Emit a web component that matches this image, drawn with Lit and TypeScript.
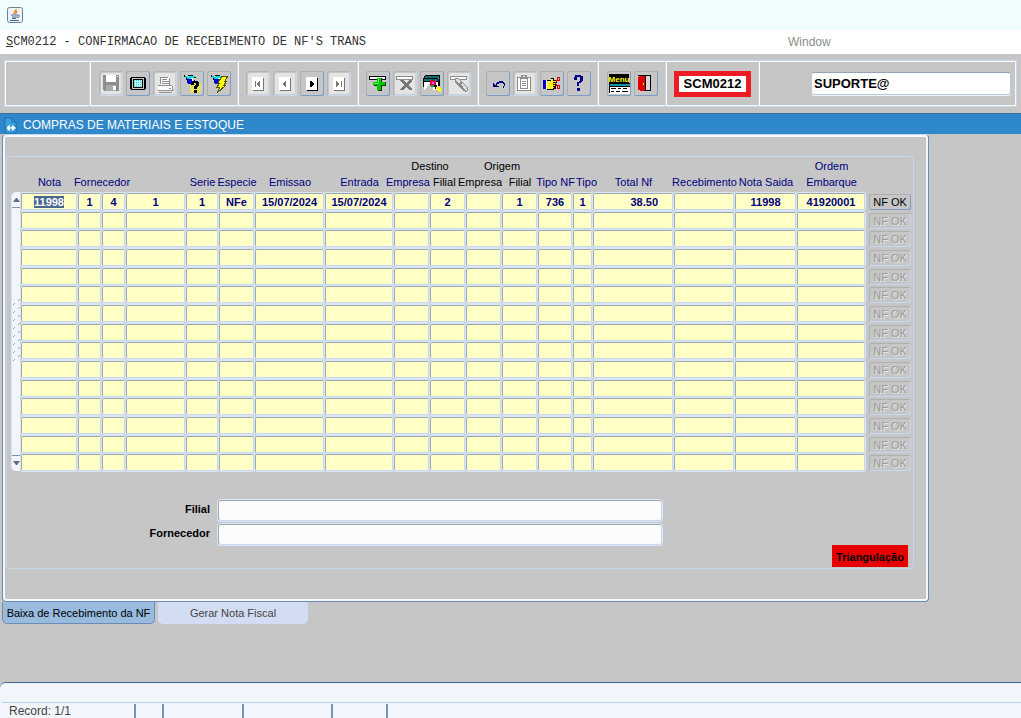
import { LitElement, html, css, svg, nothing, TemplateResult } from "lit";
import { customElement } from "lit/decorators.js";
import { classMap } from "lit/directives/class-map.js";

type Tool = { name: string; art: TemplateResult; off?: boolean };
type Column = { key: string; label: string; width: number; align?: "right" };

const torch = svg`
  <path d="M5 5h2v2h-2zM7 6h2v2h-2z" fill="#00c8d8"/>
  <path d="M9 4h4v1h2v2h-3v1h-3z" fill="#00e0e8"/>
  <path d="M4 4h1v2h-1zM6 7h1v2h1v1h-1v-1h-1zM8 4h5v1h-5zM14 6h2v1h-2zM14 9h1v1h-1zM13 10h1v1h-1z" fill="#000"/>
  <path d="M7 8h5v1h1v3h-2v1h-3v-1h-1z" fill="#0000c8"/>
  <path d="M11 7h2v3h-1v-2h-1z" fill="#fff"/>`;

const page = svg`
  <path d="M6 6h11v13h-11z" fill="#fff"/>
  <path d="M17 7h1v13h-11v-1h10z" fill="#777"/>`;

const bar = svg`<path d="M3 5h17v4h-17z" fill="#000"/><path d="M4 6h15v2h-15z" fill="#fff"/>`;
const barOff = svg`<path d="M3 5h17v4h-17z" fill="#8c8c8c"/><path d="M4 6h15v2h-15z" fill="#fff"/>`;

const groups: Tool[][] = [
  [
    { name: "Salvar", off: true, art: svg`
      <path d="M4 4h16v16h-15l-1-1z" fill="#8e8e8e"/>
      <path d="M7 4h10v7h-10z" fill="#fff"/>
      <path d="M7 14h10v6h-10z" fill="#a9a9a9"/><path d="M14 15h3v4h-3z" fill="#fff"/>
      <path d="M18 5h1v1h-1z" fill="#fff"/>` },
    { name: "Tela", art: svg`
      <path d="M5 6h14v1h1v11h-1v1h-14v-1h-1v-11h1z" fill="#000"/>
      <path d="M6 7h12v11h-12z" fill="#c6c6c6"/>
      <path d="M7 8h10v9h-10z" fill="#000"/><path d="M8 9h8v7h-8z" fill="#b8f4f4"/>
      <path d="M8 9.500h8M8 11.500h8M8 13.500h8M8 15.500h8" stroke="#38d0d8" stroke-dasharray="1 1"/>` },
    { name: "Imprimir", off: true, art: svg`
      <path d="M8 6h8l1 1v7h-10v-8z" fill="#fff"/>
      <path d="M7 6h8v1h-7v6h-1zM9 8h5v1h-5zM9 10h7v1h-7zM9 12h7v1h-7zM16 7h1v7h-1z" fill="#8c8c8c"/>
      <path d="M5 15h15v5h-15z" fill="#fff"/>
      <path d="M5 14h14v1h-14zM5 19h16v1h-16zM19 15h1v4h-1zM16 17h2v1h-2zM6 21h13v1h-13z" fill="#909090"/>` },
    { name: "Entrar consulta", art: svg`
      <path d="M10 12.500h11M10 14.500h11M10 16.500h11M10 18.500h11M10 20.500h11" stroke="#ffff00" stroke-dasharray="1 1"/>
      <path d="M11 13.500h10M11 15.500h10M11 17.500h10M11 19.500h10M11 21.500h10" stroke="#ffff00" stroke-dasharray="1 1"/>
      ${torch}
      <path d="M13 10h5v1h1v4h-1v1h-1v2h-3v-3h1v-1h1v-2h-2v2h-3v-2h1v-1h1zM14 19h3v3h-3z" fill="#000"/>` },
    { name: "Executar consulta", art: svg`
      ${torch}
      <path d="M15 5h6l-3 5h2l-3 4h2l-9 8 3-6h-3l3-4h-2z" fill="#ffff00" stroke="#555500" stroke-width="1"/>` },
  ],
  [
    { name: "Primeiro", off: true, art: svg`${page}<path d="M9 10h1v6h-1zM14 10v6h-1v-1h-1v-1h-1v-2h1v-1h1v-1z" fill="#777"/>` },
    { name: "Anterior", off: true, art: svg`${page}<path d="M13 10v6h-1v-1h-1v-1h-1v-2h1v-1h1v-1z" fill="#777"/>` },
    { name: "Proximo", art: svg`<path d="M6 6h11v13h-11z" fill="#fff"/><path d="M17 7h1v13h-11v-1h10z" fill="#000"/><path d="M10 10h2v1h1v1h1v2h-1v1h-1v1h-2z" fill="#000"/>` },
    { name: "Ultimo", off: true, art: svg`${page}<path d="M14 10h1v6h-1zM9 10h1v1h1v1h1v2h-1v1h-1v1h-1z" fill="#777"/>` },
  ],
  [
    { name: "Inserir", art: svg`${bar}
      <path d="M11 7h5v4h4v4h-4v5h-4v-5h-4v-3h3z" fill="#003c00"/>
      <path d="M11 7h4v4h4v3h-4v5h-4v-5h-4v-3h4z" fill="#00c800"/><path d="M12 8h1v4h-1zM8 12h4v1h-4z" fill="#60ff60"/>` },
    { name: "Excluir", off: true, art: svg`${barOff}
      <path d="M7 9h3l3 3 3-3h3v1l-4 4 4 4v1h-3l-3-3-3 3h-3v-1l4-4-4-4z" fill="#777"/>` },
    { name: "Limpar", art: svg`
      <path d="M5 4h15v1h-15zM3 8h1v8h-1zM3 7h15v1h-15zM19 5h1v10h-1zM3 10h15v1h-15zM4 5h1v2h-1zM18 8h1v7h-1z" fill="#000"/>
      <path d="M5 5h14v2h-14zM4 8h14v2h-14z" fill="#107078"/>
      <path d="M4 11h14v8h-10v-3l-2 3h-2z" fill="#fff"/>
      <path d="M5 19l4-6 4 2v4z" fill="#c6c6c6"/>
      <path d="M10 9h4v1h2v4h-1v2h-4v-1h-1z" fill="#e00040"/><path d="M12 11h2v2h-2z" fill="#ff50ff"/>
      <path d="M11 14h3v2h-3z" fill="#00a830"/><path d="M14 14h3v2h1v2h-3v-2h-1z" fill="#000"/>
      <path d="M16 16h3l2 2v3h-2l-3-3z" fill="#ffff00"/>` },
    { name: "Editar", off: true, art: svg`${barOff}
      <path d="M8 7h4l9 10v3l-2 1-3-1-8-9z" fill="#8c8c8c"/>
      <path d="M9 8h3l2 3-2 1-3-2zM14 13l2-1 4 5v3l-2-1z" fill="#dedede"/>` },
  ],
  [
    { name: "Desfazer", art: svg`
      <path d="M6 10h1v6h6v-1h-2v-1h-2v-1h-1v-1h-1v-2zM10 12h1v-1h2v-1h4v1h1v1h1v3h-1v2h-1v-2h1v-2h-1v-1h-4v1h-2v1h-1z" fill="#000080"/>` },
    { name: "Lista", off: true, art: svg`
      <path d="M4 6h14v14h-14z" fill="#8c8c8c"/><path d="M5 7h12v12h-12z" fill="#fff"/>
      <path d="M7 7h8v11h-8z" fill="#8c8c8c"/><path d="M8 8h6v9h-6z" fill="#fff"/>
      <path d="M8 4h6v4h-6z" fill="#8c8c8c"/><path d="M10 5h2v1h-2z" fill="#fff"/>
      <path d="M9 10h4v1h-4zM9 12h4v1h-4zM9 14h4v1h-4z" fill="#8c8c8c"/>` },
    { name: "Recortar", art: svg`
      <path d="M3 9h3v9h-3z" fill="#0000d0"/><path d="M6 9h1v9h-1z" fill="#fff"/>
      <path d="M7 9h4v-2h3v2h3v3h-1v6h-2v1h-7z" fill="#000"/>
      <path d="M7 10h4v-2h2v2h3v1h-3v1h2v1h-2v1h2v1h-2v1h1v1h-1v1h-6z" fill="#ffee20"/>
      <path d="M17.500 6.500h2v3h-2zM17.500 14.500h2v3h-2zM17 9l-2 4M17 15l-2-4" fill="none" stroke="#e00000"/>` },
    { name: "Ajuda", art: svg`
      <path d="M8 4h6v1h2v5h-1v1h-1v1h-2v3h-2v-4h2v-1h1v-4h-3v3h-3v-3h1zM10 17h3v3h-3z" fill="#000090"/>` },
  ],
  [
    { name: "Menu", art: svg`
      <path d="M2 3h20v9h-20z" fill="#000"/>
      <text class="tiny" x="12" y="11" text-anchor="middle">Menu</text>
      <path d="M2 13h21v2h-21z" fill="#0a98a8"/><path d="M2 15h21v8h-21z" fill="#fff"/>
      <path d="M2 12h21v1h-21zM2 15h21v1h-21zM2 13h1v9h-1zM4 17h5v1h-5zM11 17h3v1h-3zM16 17h4v1h-4zM4 20h3v1h-3zM9 20h4v1h-4zM15 20h6v1h-6z" fill="#000"/>` },
    { name: "Sair", art: svg`
      <path d="M4 4h13v16h-9v-1h8v-14h-12z" fill="#000"/>
      <path d="M12 5h4v14h-4z" fill="#d8d8d8"/><path d="M4 6h1v-1h6v1h1v13h-1v1h-5v-1h-2z" fill="#e00000"/>
      <path d="M11 5h1v15h-2v-1h1z" fill="#000"/><path d="M9 12h1v2h-1z" fill="#ffff00"/>` },
  ],
];

const columns: Column[] = [
  { key: "nota", label: "Nota", width: 57 },
  { key: "forn1", label: "Fornecedor, empresa", width: 24 },
  { key: "forn2", label: "Fornecedor, filial", width: 24 },
  { key: "forn3", label: "Fornecedor, codigo", width: 60 },
  { key: "serie", label: "Serie", width: 33 },
  { key: "especie", label: "Especie", width: 36 },
  { key: "emissao", label: "Emissao", width: 70 },
  { key: "entrada", label: "Entrada", width: 69 },
  { key: "destEmpresa", label: "Destino, Empresa", width: 36 },
  { key: "destFilial", label: "Destino, Filial", width: 36 },
  { key: "origEmpresa", label: "Origem, Empresa", width: 36 },
  { key: "origFilial", label: "Origem, Filial", width: 36 },
  { key: "tipoNf", label: "Tipo NF", width: 35 },
  { key: "tipo", label: "Tipo", width: 20 },
  { key: "total", label: "Total Nf", width: 81, align: "right" },
  { key: "recebimento", label: "Recebimento", width: 61 },
  { key: "notaSaida", label: "Nota Saida", width: 62 },
  { key: "ordem", label: "Ordem Embarque", width: 69 },
];

const records: Record<string, string>[] = [
  {
    nota: "11998", forn1: "1", forn2: "4", forn3: "1", serie: "1", especie: "NFe",
    emissao: "15/07/2024", entrada: "15/07/2024", destFilial: "2", origFilial: "1",
    tipoNf: "736", tipo: "1", total: "38.50", notaSaida: "11998", ordem: "41920001",
  },
];

@customElement("tool-bar")
class ToolBar extends LitElement {
  static styles = css`
    :host { display: block; background: #c6c6c6; padding: 6px 4px; }
    .frame { display: flex; height: 47px; box-sizing: border-box; border: 1px solid #c6d7ef; box-shadow: inset 1px 1px #fff, inset -1px -1px #f4f8ff; }
    .cell { display: flex; align-items: center; gap: 3px; padding: 0 7px; border-right: 1px solid #fff; box-shadow: inset -1px 0 #c6d7ef; box-sizing: border-box; flex: none; }
    .blank { width: 86px; }
    .first { width: 148px; padding-left: 8px; }
    .group { width: 120px; }
    .short { width: 68px; padding-left: 8px; }
    .user { flex: 1; border: 0; box-shadow: none; padding: 0 5px 0 51px; min-width: 0; }
    button { width: 24px; height: 25px; padding: 0; border: 0; border-radius: 2px; background: #c6c6c6; box-shadow: inset 1px 1px #adadad, inset -1px -1px #7b9cc6; display: block; flex: none; }
    button:disabled { background: #e4e4e4; box-shadow: inset 1px 1px #b5b5b5, inset -1px -1px #c6d7ef, inset 2px 2px #c6c6c6, inset -2px -2px #d0d0d0; }
    svg { display: block; shape-rendering: crispEdges; }
    .tiny { font: bold 8px "Liberation Sans", Arial, sans-serif; fill: #ffff00; }
    .code { font: bold 13px/16px "Liberation Sans", Arial, sans-serif; color: #000; background: #fff; border: 5px solid #ed1c24; width: 77px; height: 26px; box-sizing: border-box; text-align: center; white-space: nowrap; }
    .code-cell { width: 93px; padding: 0 7px; }
    input { width: 100%; height: 23px; box-sizing: border-box; border: 1px solid #b8c8dc; border-top-color: #94a3b8; border-radius: 3px; background: #fff; padding: 0 2px; font: bold 13px "Liberation Sans", Arial, sans-serif; color: #000; box-shadow: 0 1px #f0f5fc; }
  `;
  render() {
    const sizes = ["first", "group", "group", "group", "short"];
    return html`<div class="frame" role="toolbar">
      <div class="cell blank"></div>
      ${groups.map((g, i) => html`<div class="cell ${sizes[i]}">
        ${g.map((t) => html`<button aria-label=${t.name} ?disabled=${!!t.off}>
          <svg width="24" height="25" viewBox="0 0 24 25" aria-hidden="true">${t.art}</svg></button>`)}
      </div>`)}
      <div class="cell code-cell"><div class="code">SCM0212</div></div>
      <div class="cell user"><input aria-label="Usuario" .value=${"SUPORTE@"} /></div>
    </div>`;
  }
}

@customElement("nota-grid")
class NotaGrid extends LitElement {
  static styles = css`
    :host { display: block; }
    table { border-collapse: collapse; table-layout: fixed; width: 890px; font: 11px/13px "Liberation Sans", Arial, sans-serif; color: #000080; }
    th, td { padding: 0; font-weight: normal; vertical-align: top; }
    th { height: 16px; }
    .lab { display: flex; justify-content: center; white-space: nowrap; }
    .start { justify-content: flex-start; padding-left: 3px; }
    .end { justify-content: flex-end; }
    .black { color: #000; }
    tbody tr { height: 19px; }
    tbody tr:nth-child(3n + 2) { height: 18px; }
    input { display: block; margin-top: 1px; width: calc(100% - 1px); height: 17px; box-sizing: border-box; border: 1px solid #c6d7ef; border-top-color: #a0a6b0; border-left-color: #a0a8b4; border-radius: 2px; box-shadow: 0 0 0 1px #d9e6f6; background: #ffffc6; padding: 0; font: bold 11px "Liberation Sans", Arial, sans-serif; color: #000080; text-align: center; outline: none; }
    input::selection { background: #4a6990; color: #fff; }
    .right { text-align: right; padding-right: 14px; }
    button { display: block; margin: 2px 0 0 3px; width: 42px; height: 16px; padding: 0; border: 0; border-radius: 2px; background: #c6c6c6; box-shadow: inset 1px 1px #adadad, inset -1px -1px #7b9cc6; font: 11px/16px "Liberation Sans", Arial, sans-serif; color: #000; }
    button:disabled { color: #999; text-shadow: 1px 1px #e6e6e6; box-shadow: inset 1px 1px #b0b0b0, inset -1px -1px #c6d7ef; }
    .track { width: 9px; height: 279px; box-sizing: border-box; background: #f2f6fc; border-radius: 5px 0 0 5px; border-left: 1px solid #dbe6f5; display: flex; flex-direction: column; justify-content: space-between; align-items: stretch; }
    .grip { align-self: center; }
    .arrow { width: 8px; height: 16px; margin: 0; background: none; box-shadow: none; border-radius: 0; }
    .up { border-bottom: 1px solid #7b94b5; }
    .down { border-top: 1px solid #7b94b5; }
    svg { display: block; }
  `;
  firstUpdated() {
    const first = this.renderRoot.querySelector("tbody input") as HTMLInputElement | null;
    first?.focus();
    first?.select();
  }
  render() {
    const rows = Array.from({ length: 15 }, (_, i) => records[i]);
    const lab = (t: string, cls = "") => html`<div class="lab ${cls}">${t}</div>`;
    return html`<table>
      <colgroup>
        <col style="width:10px" />
        ${columns.map((c) => html`<col style="width:${c.width}px" />`)}
        <col style="width:45px" />
      </colgroup>
      <thead>
        <tr>
          <th colspan="9"></th>
          <th colspan="2">${lab("Destino", "black")}</th>
          <th colspan="2">${lab("Origem", "black")}</th>
          <th colspan="5"></th>
          <th>${lab("Ordem")}</th>
          <th></th>
        </tr>
        <tr>
          <th></th>
          <th>${lab("Nota")}</th>
          <th colspan="2">${lab("Fornecedor")}</th>
          <th></th>
          <th>${lab("Serie")}</th>
          <th>${lab("Especie")}</th>
          <th>${lab("Emissao")}</th>
          <th>${lab("Entrada")}</th>
          <th>${lab("Empresa", "end")}</th>
          <th>${lab("Filial", "start black")}</th>
          <th>${lab("Empresa", "end black")}</th>
          <th>${lab("Filial", "black")}</th>
          <th>${lab("Tipo NF")}</th>
          <th>${lab("Tipo", "start")}</th>
          <th>${lab("Total Nf")}</th>
          <th>${lab("Recebimento")}</th>
          <th>${lab("Nota Saida")}</th>
          <th>${lab("Embarque")}</th>
          <th></th>
        </tr>
      </thead>
      <tbody>
        ${rows.map((r, i) => html`<tr>
          ${i === 0 ? html`<td rowspan="15"><div class="track">
            <button class="arrow up" aria-label="Acima"><svg width="8" height="15" viewBox="0 0 8 15"><path d="M1 10h7l-3-4h-1z" fill="#63697c"/></svg></button>
            <svg class="grip" width="8" height="66" viewBox="0 0 8 66">${Array.from({ length: 8 }, (_, k) => svg`<path d="M1 ${6 + k * 8}l2-2M6 ${2 + k * 8}l2-2" stroke="#8aa2c4" fill="none"/>`)}</svg>
            <button class="arrow down" aria-label="Abaixo"><svg width="8" height="15" viewBox="0 0 8 15"><path d="M1 5h7l-3 4h-1z" fill="#63697c"/></svg></button>
          </div></td>` : nothing}
          ${columns.map((c) => html`<td><input class=${classMap({ right: c.align === "right" })} aria-label="${c.label}, linha ${i + 1}" .value=${r?.[c.key] ?? ""} /></td>`)}
          <td><button ?disabled=${!r}>NF OK</button></td>
        </tr>`)}
      </tbody>
    </table>`;
  }
}

@customElement("app-root")
class AppRoot extends LitElement {
  static styles = css`
    :host { display: flex; flex-direction: column; min-height: 100vh; background: #c6c6c6; font: 12px/16px "Liberation Sans", Arial, sans-serif; color: #000; overflow: hidden; }
    .title { height: 30px; background: #effdfd; display: flex; align-items: center; padding: 0 6px; }
    .menu { height: 24px; background: #fff; display: grid; grid-template-columns: minmax(0, 1fr) 233px; align-items: center; padding-left: 6px; }
    .menu a { color: #333; text-decoration: none; white-space: nowrap; font: 12px/16px "Liberation Mono", "Courier New", monospace; }
    .menu a.window { font-family: "Liberation Sans", Arial, sans-serif; color: #8c8c8c; }
    .bluebar { margin: 0; height: 21px; box-sizing: border-box; border-top: 1px solid #3f6e9b; background: #2f88ca; color: #fff; display: flex; align-items: center; gap: 6px; padding: 2px 4px 0; font-size: 12px; font-weight: normal; }
    .work { flex: 1; padding: 0 0 40px 2px; }
    .panel { width: 927px; box-sizing: border-box; border: 1px solid #6b8cb5; border-top-color: #c6d7ef; border-radius: 4px; box-shadow: inset 0 0 0 2px #f4f8fd; padding: 21px 14px 32px 3px; }
    .group { border: 1px solid #c6d7ef; border-radius: 4px; padding: 3px 0 1px 4px; }
    .fields { display: grid; grid-template-columns: 199px 444px; column-gap: 8px; row-gap: 3px; margin-top: 28px; }
    .fields label { font-weight: bold; font-size: 11px; line-height: 18px; text-align: right; }
    .fields input { width: 100%; height: 21px; box-sizing: border-box; border: 1px solid #c6d7ef; border-top-color: #a0a6b0; border-left-color: #a0a8b4; border-radius: 3px; background: #fcfcfc; box-shadow: 0 0 0 1px #d9e6f6; }
    .flag { margin: 0 5px 0 auto; width: 76px; height: 22px; background: #e70000; font-weight: bold; font-size: 11px; line-height: 24px; text-align: center; }
    .tabs { display: flex; gap: 3px; }
    .tabs button { height: 22px; padding: 0; border: 1px solid #d2dcf2; border-top: 0; border-radius: 0 0 5px 5px; background: #d2dcf2; color: #444; font: 11px "Liberation Sans", Arial, sans-serif; width: 150px; }
    .tabs button.on { width: 153px; background: #98bbde; border-color: #6b8cb5; color: #000; }
    .status { height: 36px; box-sizing: border-box; background: #f2f6fc; border-top: 1px solid #3f6493; border-radius: 6px 0 0 0; overflow: hidden; color: #444; padding: 19px 0 0 2px; }
    .cells { display: grid; grid-template-columns: 134px 28px 80px 89px 55px 1fr; border-top: 1px solid #b8d0ec; height: 16px; box-sizing: border-box; }
    .cells span { border-right: 2px solid #7b94b5; margin-top: 1px; padding-left: 7px; line-height: 14px; white-space: nowrap; }
    .cells span:last-child { border: 0; }
    .u { text-decoration: underline; }
  `;
  render() {
    return html`
      <header class="title">
        <svg width="18" height="18" viewBox="0 0 18 18" aria-label="Java">
          <rect x="1.500" y="1.500" width="15" height="15" rx="2" fill="#eef3f8" stroke="#6d8196" />
          <path d="M10 3c1 2-3 3-2 5M11 5c0 1-2 2-1 3" fill="none" stroke="#e8771a" stroke-width="1.300" />
          <path d="M5 9h7M6 11h5M6 12.500h4M4 14.500h9M12 9.500c2-1 2 2-1 2" fill="none" stroke="#45698f" />
        </svg>
      </header>
      <nav class="menu">
        <a href="#"><span class="u">S</span>CM0212 - CONFIRMACAO DE RECEBIMENTO DE NF'S TRANS</a>
        <a class="window" href="#">Window</a>
      </nav>
      <tool-bar></tool-bar>
      <h1 class="bluebar">
        <svg width="13" height="17" viewBox="0 0 13 17" aria-hidden="true">
          <path d="M1 1h7l4 4v11h-11z" fill="#3da0dc" stroke="#1a6fb0" />
          <path d="M8 1v4h4" fill="none" stroke="#1a6fb0" />
          <path d="M8 8l4 3-4 3z" fill="#fff" /><path d="M6 9a2 2 0 1 0 0 4M3 11h5" fill="none" stroke="#fff" stroke-width="1.500" />
        </svg>
        COMPRAS DE MATERIAIS E ESTOQUE
      </h1>
      <main class="work">
        <section class="panel">
          <div class="group">
            <nota-grid></nota-grid>
            <div class="fields">
              <label for="filial">Filial</label><input id="filial" />
              <label for="forn">Fornecedor</label><input id="forn" />
            </div>
            <div class="flag">Triangulação</div>
          </div>
        </section>
        <div class="tabs" role="tablist">
          <button class="on" role="tab" aria-selected="true">Baixa de Recebimento da NF</button>
          <button role="tab" aria-selected="false">Gerar Nota Fiscal</button>
        </div>
      </main>
      <footer class="status">
        <div class="cells"><span>Record: 1/1</span><span></span><span></span><span></span><span></span><span></span></div>
      </footer>
    `;
  }
}
